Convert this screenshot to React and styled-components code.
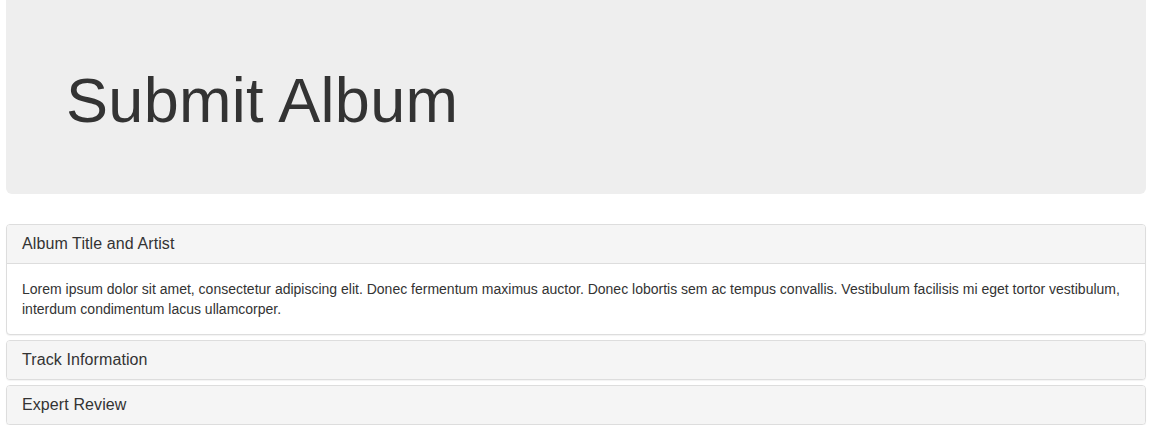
import React from "react";
import styled, { createGlobalStyle } from "styled-components";

const GlobalStyle = createGlobalStyle`
  * { box-sizing: border-box; }
  body {
    margin: 0;
    font-family: "Liberation Sans", Arial, Helvetica, sans-serif;
    font-size: 14px;
    line-height: 1.42857143;
    color: #333;
    background: #fff;
  }
`;

const Page = styled.div`
  padding: 0 7px 0 6px;
`;

const Jumbotron = styled.div`
  background: #eee;
  border-radius: 0 0 6px 6px;
  padding: 46px 60px 49px;
  margin-bottom: 30px;
`;

const Title = styled.h1`
  margin: 20px 0 10px;
  font-size: 63px;
  font-weight: 500;
  line-height: 1.1;
  letter-spacing: 0.3px;
  color: #333;
`;

const PanelGroup = styled.div`
  display: flex;
  flex-direction: column;
  gap: 5px;
`;

const Panel = styled.div`
  border: 1px solid #ddd;
  border-radius: 4px;
  background: #fff;
  box-shadow: 0 1px 1px rgba(0, 0, 0, 0.05);
  overflow: hidden;
`;

const Heading = styled.div`
  background: #f5f5f5;
  padding: 10px 15px;
  min-height: 38px;
  border-bottom: ${(p) => (p.$open ? "1px solid #ddd" : "none")};
`;

const PanelTitle = styled.h4`
  margin: 0;
  font-size: 16px;
  font-weight: 500;
  line-height: 1.1;
  letter-spacing: 0.1px;
  color: #333;
`;

const Body = styled.div`
  padding: 15px;
  p {
    margin: 0;
  }
`;

const sections = [
  {
    title: "Album Title and Artist",
    body:
      "Lorem ipsum dolor sit amet, consectetur adipiscing elit. Donec fermentum maximus auctor. Donec lobortis sem ac tempus convallis. Vestibulum facilisis mi eget tortor vestibulum, interdum condimentum lacus ullamcorper.",
  },
  { title: "Track Information" },
  { title: "Expert Review" },
];

const App = () => (
  <Page>
    <GlobalStyle />
    <Jumbotron>
      <Title>Submit Album</Title>
    </Jumbotron>
    <PanelGroup>
      {sections.map((s) => (
        <Panel key={s.title}>
          <Heading $open={!!s.body}>
            <PanelTitle>{s.title}</PanelTitle>
          </Heading>
          {s.body && (
            <Body>
              <p>{s.body}</p>
            </Body>
          )}
        </Panel>
      ))}
    </PanelGroup>
  </Page>
);

export default App;
